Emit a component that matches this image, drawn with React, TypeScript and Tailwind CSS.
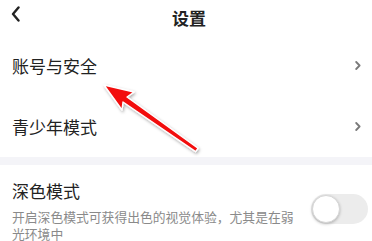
import { ReactNode } from 'react';

function Chevron() {
  return (
    <svg width="6" height="9" viewBox="0 0 6 9" className="shrink-0">
      <path d="M1.2 1 L4.6 4.5 L1.2 8" fill="none" stroke="#7a7a7a" strokeWidth="1.8" strokeLinecap="round" strokeLinejoin="round" />
    </svg>
  );
}

function Row({ children }: { children: ReactNode }) {
  return (
    <div className="flex h-[61px] items-center justify-between pl-3 pr-[11px]">
      <span className="text-[17px] leading-none text-[#222]">{children}</span>
      <Chevron />
    </div>
  );
}

export default function App() {
  return (
    <div
      className="relative h-[241px] w-[372px] overflow-hidden bg-white"
      style={{ fontFamily: '"Noto Sans CJK SC", "Noto Sans", sans-serif' }}
    >
      <div className="relative flex h-[35px] items-center justify-center">
        <svg width="10" height="16" viewBox="0 0 10 16" className="absolute left-[11px] top-[6px]">
          <path d="M7.5 1.5 L2 8 L7.5 14.5" fill="none" stroke="#222" strokeWidth="2.4" strokeLinecap="round" strokeLinejoin="round" />
        </svg>
        <span className="pl-[6px] text-[17px] font-bold leading-none text-[#222]">设置</span>
      </div>

      <Row>账号与安全</Row>
      <Row>青少年模式</Row>

      <div className="h-[8px] bg-[#f4f4f8]" />

      <div className="flex items-start justify-between pl-3 pr-[4px] pt-[17px]">
        <div className="w-[292px]">
          <div className="text-[17px] leading-none text-[#222]">深色模式</div>
          <p className="mt-[9px] text-[12.8px] leading-[17px] text-[#8a8a8a]">
            开启深色模式可获得出色的视觉体验，尤其是在弱光环境中
          </p>
        </div>
        <div className="mt-[12px] flex h-[30px] w-[57px] items-center rounded-full bg-[#ececec] px-[1px]">
          <div className="h-[28px] w-[28px] rounded-full border border-[#d6d6d6] bg-white shadow-[0_1px_3px_rgba(0,0,0,0.25)]" />
        </div>
      </div>

      <svg width="372" height="241" className="pointer-events-none absolute left-0 top-0">
        <defs>
          <filter id="sh" x="-20%" y="-20%" width="140%" height="140%">
            <feDropShadow dx="1" dy="1.5" stdDeviation="1.5" floodColor="#000" floodOpacity="0.35" />
          </filter>
        </defs>
        <polygon
          points="104,85 134,92 127,97 198,148.3 195.6,151.7 123,102 122,110"
          fill="#f20d0d"
          stroke="#fff"
          strokeWidth="1.4"
          strokeLinejoin="round"
          filter="url(#sh)"
        />
      </svg>
    </div>
  );
}
